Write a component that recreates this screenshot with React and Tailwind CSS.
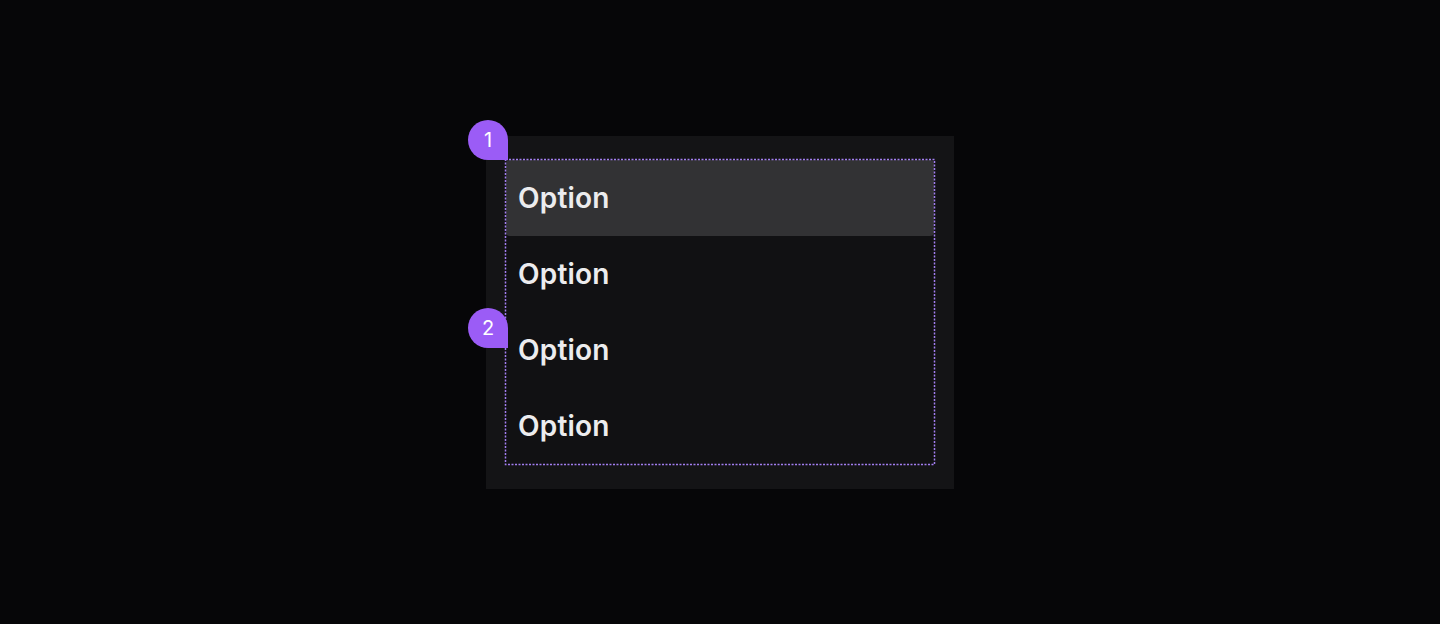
const options = ['Option', 'Option', 'Option', 'Option'];

function Marker({ n, className }) {
  return (
    <div
      className={`absolute flex h-10 w-10 items-center justify-center rounded-full rounded-br-none bg-[#9b5cf6] text-[20px] font-normal text-white ${className}`}
    >
      {n}
    </div>
  );
}

export default function App() {
  return (
    <div className="flex h-[624px] w-full items-center justify-center bg-[#060608] font-['Inter',sans-serif]">
      <div className="relative w-[468px] bg-[#141416] px-[19px] pt-[23px] pb-[24px]">
        <div className="relative">
          {/* dotted selection outline */}
          <svg className="pointer-events-none absolute inset-0 h-full w-full overflow-visible">
            <rect
              x="0.5"
              y="0.5"
              width="calc(100% - 1px)"
              height="calc(100% - 1px)"
              fill="none"
              stroke="#a27ef0"
              strokeWidth="1.5"
              strokeDasharray="2 1.5"
            />
          </svg>
          <div className="p-px">
            {options.map((label, i) => (
              <div
                key={i}
                className={`flex h-[76px] items-center px-3 text-[28px] font-semibold tracking-[0.2px] text-[#ececee] ${
                  i === 0 ? 'rounded-[4px] bg-[#323234]' : 'bg-[#111113]'
                }`}
              >
                {label}
              </div>
            ))}
          </div>
        </div>
        <Marker n="1" className="left-[-18px] top-[-16px]" />
        <Marker n="2" className="left-[-18px] top-[172px]" />
      </div>
    </div>
  );
}
